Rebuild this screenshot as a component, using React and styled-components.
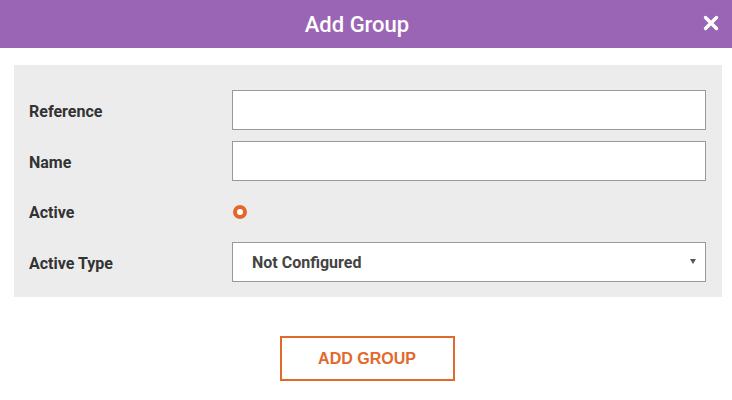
import React from "react";
import styled, { createGlobalStyle } from "styled-components";

const Global = createGlobalStyle`
  html, body { margin: 0; padding: 0; background: #fff; }
  body { font-family: Roboto, "Noto Sans", sans-serif; }
  * { box-sizing: border-box; }
`;

const Header = styled.div`
  position: relative;
  height: 48px;
  background: #9a65b5;
  display: flex;
  align-items: center;
  justify-content: center;
  padding-right: 18px;
`;

const Title = styled.h1`
  margin: 0;
  color: #fff;
  font-family: Roboto, sans-serif;
  font-weight: 500;
  font-size: 22px;
  letter-spacing: 0;
`;

const Close = styled.button`
  position: absolute;
  right: 13px;
  top: 15px;
  width: 16px;
  height: 16px;
  padding: 0;
  border: 0;
  background: none;
  display: flex;
  cursor: pointer;
`;

const Body = styled.div`
  padding: 17px 10px 0 14px;
`;

const Panel = styled.div`
  background: #ececec;
  padding: 25px 16px 15px 15px;
  display: flex;
  flex-direction: column;
  gap: 11px;
`;

const Row = styled.div`
  display: grid;
  grid-template-columns: 203px 1fr;
  align-items: center;
  height: ${(p) => (p.$short ? "39px" : "40px")};
`;

const Label = styled.label`
  font-family: Roboto, sans-serif;
  font-weight: 700;
  font-size: 16px;
  color: #333;
  padding-top: 2px;
`;

const Input = styled.input`
  height: 40px;
  width: 100%;
  border: 1px solid #999;
  background: #fff;
  outline: none;
  font-family: Roboto, sans-serif;
  font-size: 16px;
`;

const Radio = styled.span`
  width: 14px;
  height: 14px;
  margin-left: 1px;
  border-radius: 50%;
  border: 4px solid #e2692c;
  background: #fff;
`;

const SelectBox = styled.div`
  position: relative;
  height: 40px;
  border: 1px solid #999;
  background: #fff;
  display: flex;
  align-items: center;
  padding-left: 19px;
  font-family: Roboto, sans-serif;
  font-weight: 700;
  font-size: 16px;
  color: #444;
`;

const Caret = styled.span`
  position: absolute;
  right: 9px;
  top: 16px;
  width: 0;
  height: 0;
  border-left: 3px solid transparent;
  border-right: 3px solid transparent;
  border-top: 5px solid #555;
`;

const Footer = styled.div`
  display: flex;
  justify-content: center;
  padding-top: 39px;
  padding-right: 2px;
`;

const Button = styled.button`
  width: 175px;
  height: 45px;
  border: 2px solid #e2692c;
  background: #fff;
  color: #e2692c;
  font-family: "Liberation Sans", Arial, sans-serif;
  font-weight: 700;
  font-size: 16px;
  cursor: pointer;
`;

export default function App() {
  return (
    <>
      <Global />
      <Header>
        <Title>Add Group</Title>
        <Close aria-label="close">
          <svg width="16" height="16" viewBox="0 0 16 16">
            <path d="M2.5 2.5 L13.5 13.5 M13.5 2.5 L2.5 13.5" stroke="#fff" strokeWidth="3.4" strokeLinecap="round" />
          </svg>
        </Close>
      </Header>
      <Body>
        <Panel>
          <Row>
            <Label>Reference</Label>
            <Input />
          </Row>
          <Row>
            <Label>Name</Label>
            <Input />
          </Row>
          <Row $short>
            <Label>Active</Label>
            <Radio />
          </Row>
          <Row>
            <Label>Active Type</Label>
            <SelectBox>
              Not Configured
              <Caret />
            </SelectBox>
          </Row>
        </Panel>
        <Footer>
          <Button>ADD GROUP</Button>
        </Footer>
      </Body>
    </>
  );
}
